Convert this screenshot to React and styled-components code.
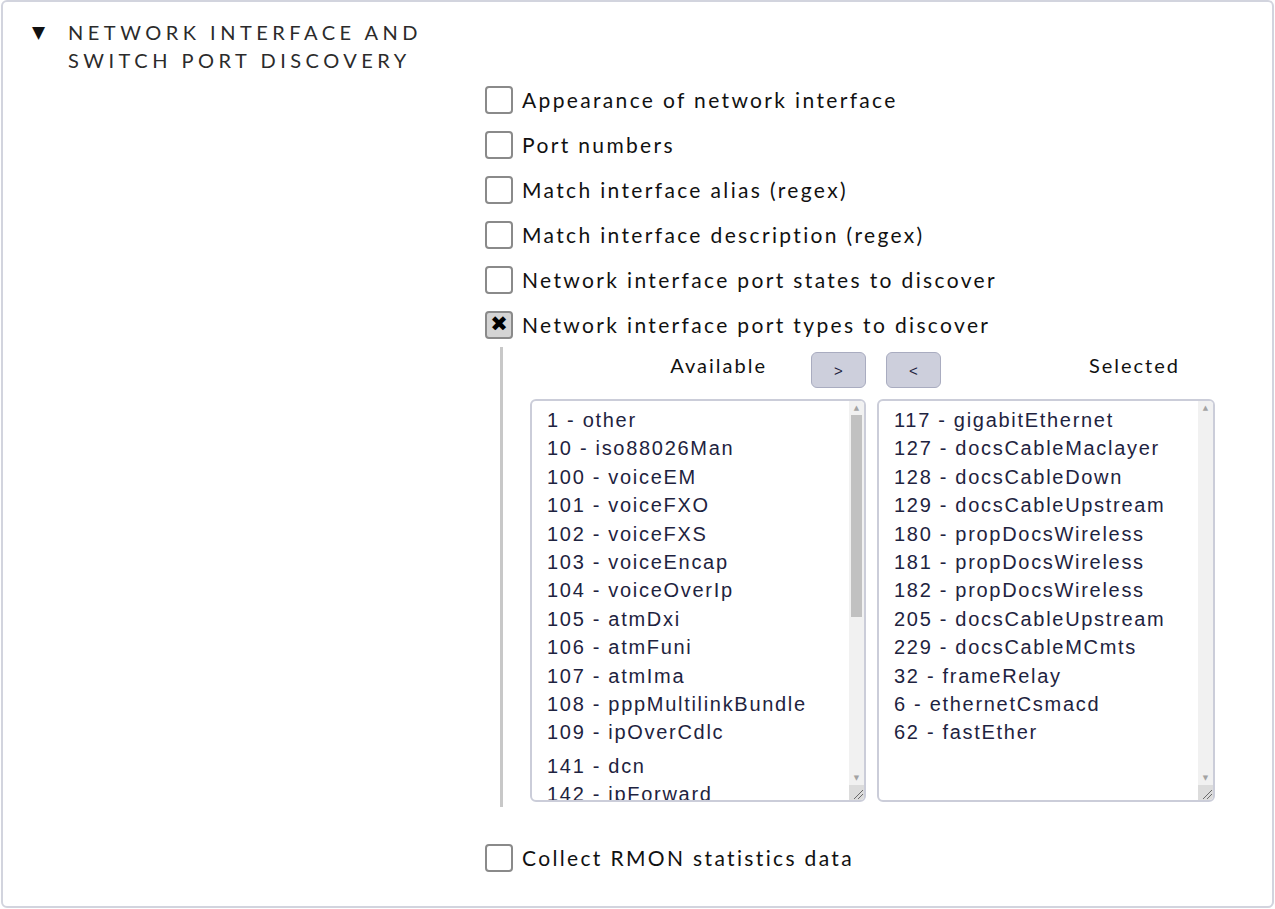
import React from 'react';
import styled, { createGlobalStyle } from 'styled-components';

const GlobalStyle = createGlobalStyle`
  html, body {
    margin: 0;
    padding: 0;
    background: #ffffff;
  }
  body {
    font-family: Lato, "Open Sans", sans-serif;
  }
`;

const available = [
  '1 - other',
  '10 - iso88026Man',
  '100 - voiceEM',
  '101 - voiceFXO',
  '102 - voiceFXS',
  '103 - voiceEncap',
  '104 - voiceOverIp',
  '105 - atmDxi',
  '106 - atmFuni',
  '107 - atmIma',
  '108 - pppMultilinkBundle',
  '109 - ipOverCdlc',
  '141 - dcn',
  '142 - ipForward',
  '143 - msdsl',
  '144 - ieee1394',
];

const selected = [
  '117 - gigabitEthernet',
  '127 - docsCableMaclayer',
  '128 - docsCableDown',
  '129 - docsCableUpstream',
  '180 - propDocsWireless',
  '181 - propDocsWireless',
  '182 - propDocsWireless',
  '205 - docsCableUpstream',
  '229 - docsCableMCmts',
  '32 - frameRelay',
  '6 - ethernetCsmacd',
  '62 - fastEther',
];

const App = () => {
  return (
    <>
      <GlobalStyle />
      <Frame>
        <Heading>
          <Triangle>▼</Triangle>
          <Title>
            Network interface and
            <br />
            switch port discovery
          </Title>
        </Heading>

        <Options>
          <Option label="Appearance of network interface" />
          <Option label="Port numbers" />
          <Option label="Match interface alias (regex)" />
          <Option label="Match interface description (regex)" />
          <Option label="Network interface port states to discover" />
          <Option label="Network interface port types to discover" checked />

          <Nested>
            <DualList>
              <Column>
                <ColumnHead>
                  <ColumnTitle>Available</ColumnTitle>
                  <MoveButton>&gt;</MoveButton>
                </ColumnHead>
                <ListBox items={available} thumb width={336} />
              </Column>
              <Column>
                <ColumnHead $right>
                  <MoveButton>&lt;</MoveButton>
                  <ColumnTitle>Selected</ColumnTitle>
                </ColumnHead>
                <ListBox items={selected} width={338} />
              </Column>
            </DualList>
          </Nested>

          <Option label="Collect RMON statistics data" />
        </Options>
      </Frame>
    </>
  );
};

const Option = ({ label, checked }) => (
  <Row>
    <Box $checked={checked}>{checked ? '✖' : null}</Box>
    <Label>{label}</Label>
  </Row>
);

const ListBox = ({ items, thumb, width }) => (
  <Listing $width={width}>
    <Items>
      {items.map((item) => (
        <ListItem key={item} $gap={item === '141 - dcn'}>
          {item}
        </ListItem>
      ))}
    </Items>
    <ScrollBar>
      <Arrow>▲</Arrow>
      <Track>{thumb && <Thumb />}</Track>
      <Arrow>▼</Arrow>
      <Grip>
        <svg width="12" height="12" viewBox="0 0 12 12">
          <path d="M2 11 L11 2 M6 11 L11 6" stroke="#6a6a6a" strokeWidth="1" />
        </svg>
      </Grip>
    </ScrollBar>
  </Listing>
);

// Стили
const Frame = styled.div`
  box-sizing: border-box;
  width: 1273px;
  height: 908px;
  margin: 0 0 0 1px;
  border: 2px solid #d2d4de;
  border-radius: 6px;
  padding: 16px 0 0 0;
`;

const Heading = styled.div`
  display: flex;
  align-items: flex-start;
  padding-left: 29px;
`;

const Triangle = styled.span`
  width: 36px;
  font-size: 17px;
  line-height: 28px;
  color: #111;
  font-family: "DejaVu Sans", sans-serif;
`;

const Title = styled.div`
  font-family: Lato, sans-serif;
  font-size: 20px;
  line-height: 28px;
  letter-spacing: 4.5px;
  text-transform: uppercase;
  color: #2b2b2b;
`;

const Options = styled.div`
  display: flex;
  flex-direction: column;
  padding-left: 482px;
  margin-top: 3px;
`;

const Row = styled.div`
  display: flex;
  align-items: center;
  height: 45px;
`;

const Box = styled.span`
  box-sizing: border-box;
  width: 28px;
  height: 28px;
  margin-right: 9px;
  border: 2px solid #8a8a8a;
  border-radius: 4px;
  background: ${({ $checked }) => ($checked ? '#d4d4d4' : '#ffffff')};
  display: flex;
  align-items: center;
  justify-content: center;
  font-family: "DejaVu Sans", sans-serif;
  font-size: 21px;
  line-height: 1;
  color: #000;
`;

const Label = styled.span`
  font-family: Lato, sans-serif;
  font-size: 21px;
  letter-spacing: 2.35px;
  color: #111;
`;

const Nested = styled.div`
  margin: 0 0 28px 15px;
  border-left: 3px solid #c8c8c8;
  padding: 5px 0 5px 27px;
`;

const DualList = styled.div`
  display: flex;
  gap: 11px;
`;

const Column = styled.div`
  display: flex;
  flex-direction: column;
  gap: 11px;
`;

const ColumnHead = styled.div`
  display: flex;
  align-items: center;
  height: 36px;
  justify-content: ${({ $right }) => ($right ? 'space-between' : 'flex-end')};
  gap: 44px;
  padding: ${({ $right }) => ($right ? '0 35px 0 9px' : '0')};
`;

const ColumnTitle = styled.span`
  font-family: Lato, sans-serif;
  font-size: 20px;
  letter-spacing: 2px;
  color: #111;
  margin-top: -10px;
`;

const MoveButton = styled.button`
  box-sizing: border-box;
  width: 55px;
  height: 36px;
  border: 1px solid #a9acc0;
  border-radius: 6px;
  background: #cdcfdc;
  color: #1e2340;
  font-family: "Liberation Sans", Arial, sans-serif;
  font-size: 15px;
  padding: 0;
  cursor: pointer;
`;

const Listing = styled.div`
  box-sizing: border-box;
  width: ${({ $width }) => $width}px;
  height: 403px;
  border: 2px solid #cbcdd9;
  border-radius: 6px;
  display: flex;
  overflow: hidden;
`;

const Items = styled.div`
  flex: 1;
  overflow: hidden;
  padding: 5px 0 0 15px;
  font-family: "Liberation Sans", Arial, sans-serif;
  font-size: 20px;
  color: #1e2340;
`;

const ListItem = styled.div`
  line-height: 28.4px;
  letter-spacing: 1.7px;
  white-space: nowrap;
  margin-top: ${({ $gap }) => ($gap ? '5px' : '0')};
`;

const ScrollBar = styled.div`
  width: 15px;
  flex: none;
  display: flex;
  flex-direction: column;
  background: #f1f1f1;
`;

const Arrow = styled.div`
  height: 14px;
  display: flex;
  align-items: center;
  justify-content: center;
  font-family: "DejaVu Sans", sans-serif;
  font-size: 7px;
  color: #a3a3a3;
`;

const Track = styled.div`
  flex: 1;
  padding: 0 2px;
`;

const Thumb = styled.div`
  height: 202px;
  background: #c1c1c1;
`;

const Grip = styled.div`
  height: 15px;
  background: #dcdcdc;
  display: flex;
  align-items: flex-end;
  justify-content: flex-end;
  svg {
    display: block;
  }
`;

export default App;
